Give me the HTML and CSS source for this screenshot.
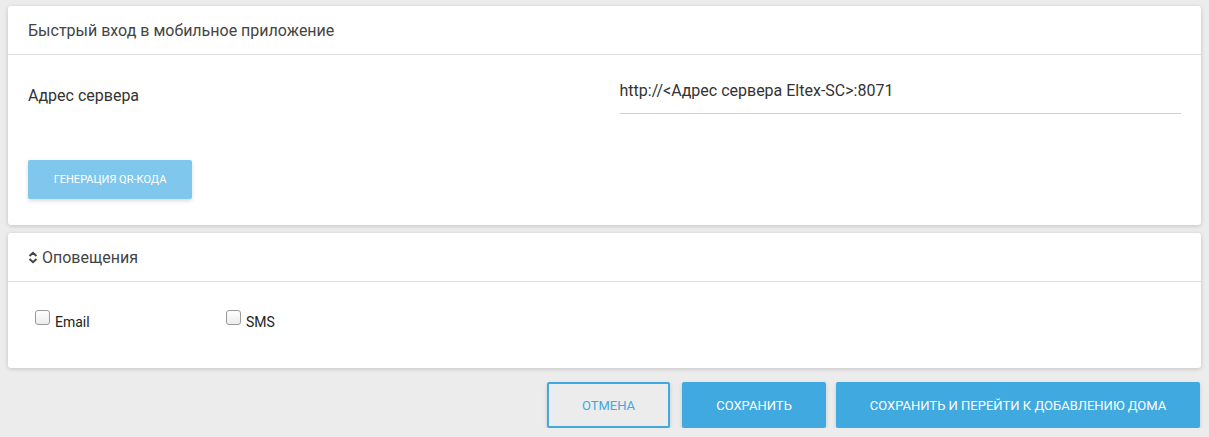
FILE: index.html
```html
<!DOCTYPE html>
<html lang="ru">
<head>
<meta charset="utf-8">
<link rel="stylesheet" href="styles.css">
</head>
<body>
<div class="page">
  <section class="card">
    <div class="card-header">Быстрый вход в мобильное приложение</div>
    <div class="card-body">
      <div class="form-row">
        <div class="label">Адрес сервера</div>
        <div class="field"><div class="input">http://&lt;Адрес сервера Eltex-SC&gt;:8071</div></div>
      </div>
      <button class="btn-qr">Генерация QR-кода</button>
    </div>
  </section>
  <section class="card">
    <div class="card-header">
      <svg class="chev" width="10" height="13" viewBox="0 0 10 13"><path d="M1.5 5 L5 1.8 L8.5 5 M1.5 8 L5 11.2 L8.5 8" fill="none" stroke="#444" stroke-width="2"/></svg>
      Оповещения
    </div>
    <div class="card-body checks">
      <label class="check check-email"><span class="box"></span>Email</label>
      <label class="check"><span class="box"></span>SMS</label>
    </div>
  </section>
  <div class="actions">
    <button class="btn btn-outline">Отмена</button>
    <button class="btn btn-primary btn-save">Сохранить</button>
    <button class="btn btn-primary btn-wide">Сохранить и перейти к добавлению дома</button>
  </div>
</div>
</body>
</html>
```
FILE: styles.css
```css
* { box-sizing: border-box; }
html, body { margin: 0; padding: 0; }
body {
  background: #ececec;
  font-family: Roboto, "Liberation Sans", sans-serif;
  color: #333;
}
.page {
  padding: 6px 8px 0 8px;
  display: flex;
  flex-direction: column;
}
.card {
  background: #fff;
  border-radius: 3px;
  box-shadow: 0 1px 4px rgba(0,0,0,0.18);
  margin-bottom: 8px;
}
.card-header {
  height: 49px;
  border-bottom: 1px solid #dcdcdc;
  padding: 0 20px;
  display: flex;
  align-items: center;
  font-size: 16px;
  color: #444;
}
.chev { margin-right: 4px; margin-top: 1px; }
.card-body {
  padding: 24px 20px 26px 20px;
}
.form-row {
  display: grid;
  grid-template-columns: 1fr 1fr;
}
.label {
  font-size: 16px;
  color: #333;
  padding-top: 7px;
}
.field { padding-left: 15px; }
.input {
  height: 35px;
  border-bottom: 1px solid #d0d0d0;
  font-size: 16px;
  color: #333;
  padding-top: 2px;
}
.btn-qr {
  margin-top: 46px;
  width: 164px;
  height: 39px;
  border: none;
  border-radius: 2px;
  background: #7fc7ec;
  color: #fff;
  font-family: Roboto, "Liberation Sans", sans-serif;
  font-size: 11px;
  text-transform: uppercase;
  box-shadow: 0 2px 4px rgba(0,0,0,0.15);
  display: block;
}
.checks {
  display: flex;
  padding: 28px 27px 38px 27px;
  height: 86px;
}
.check {
  display: flex;
  align-items: flex-end;
  font-size: 14px;
  color: #222;
  width: 191px;
}
.box {
  width: 15px;
  height: 15px;
  border: 1px solid #9a9a9a;
  border-radius: 3px;
  background: linear-gradient(#fff, #ececec);
  margin-right: 5px;
  align-self: flex-start;
}
.actions {
  display: flex;
  justify-content: flex-end;
  margin-top: 6px;
  padding-right: 1px;
}
.btn {
  height: 46px;
  border-radius: 2px;
  font-family: Roboto, "Liberation Sans", sans-serif;
  font-size: 13px;
  text-transform: uppercase;
  box-shadow: 0 2px 4px rgba(0,0,0,0.15);
}
.btn-outline {
  width: 123px;
  background: #ececec;
  border: 2px solid #3fa9e0;
  color: #3fa9e0;
  margin-right: 12px;
}
.btn-primary {
  background: #3fa9e0;
  border: none;
  color: #fff;
}
.btn-save { width: 144px; margin-right: 10px; }
.btn-wide { width: 364px; }
```
